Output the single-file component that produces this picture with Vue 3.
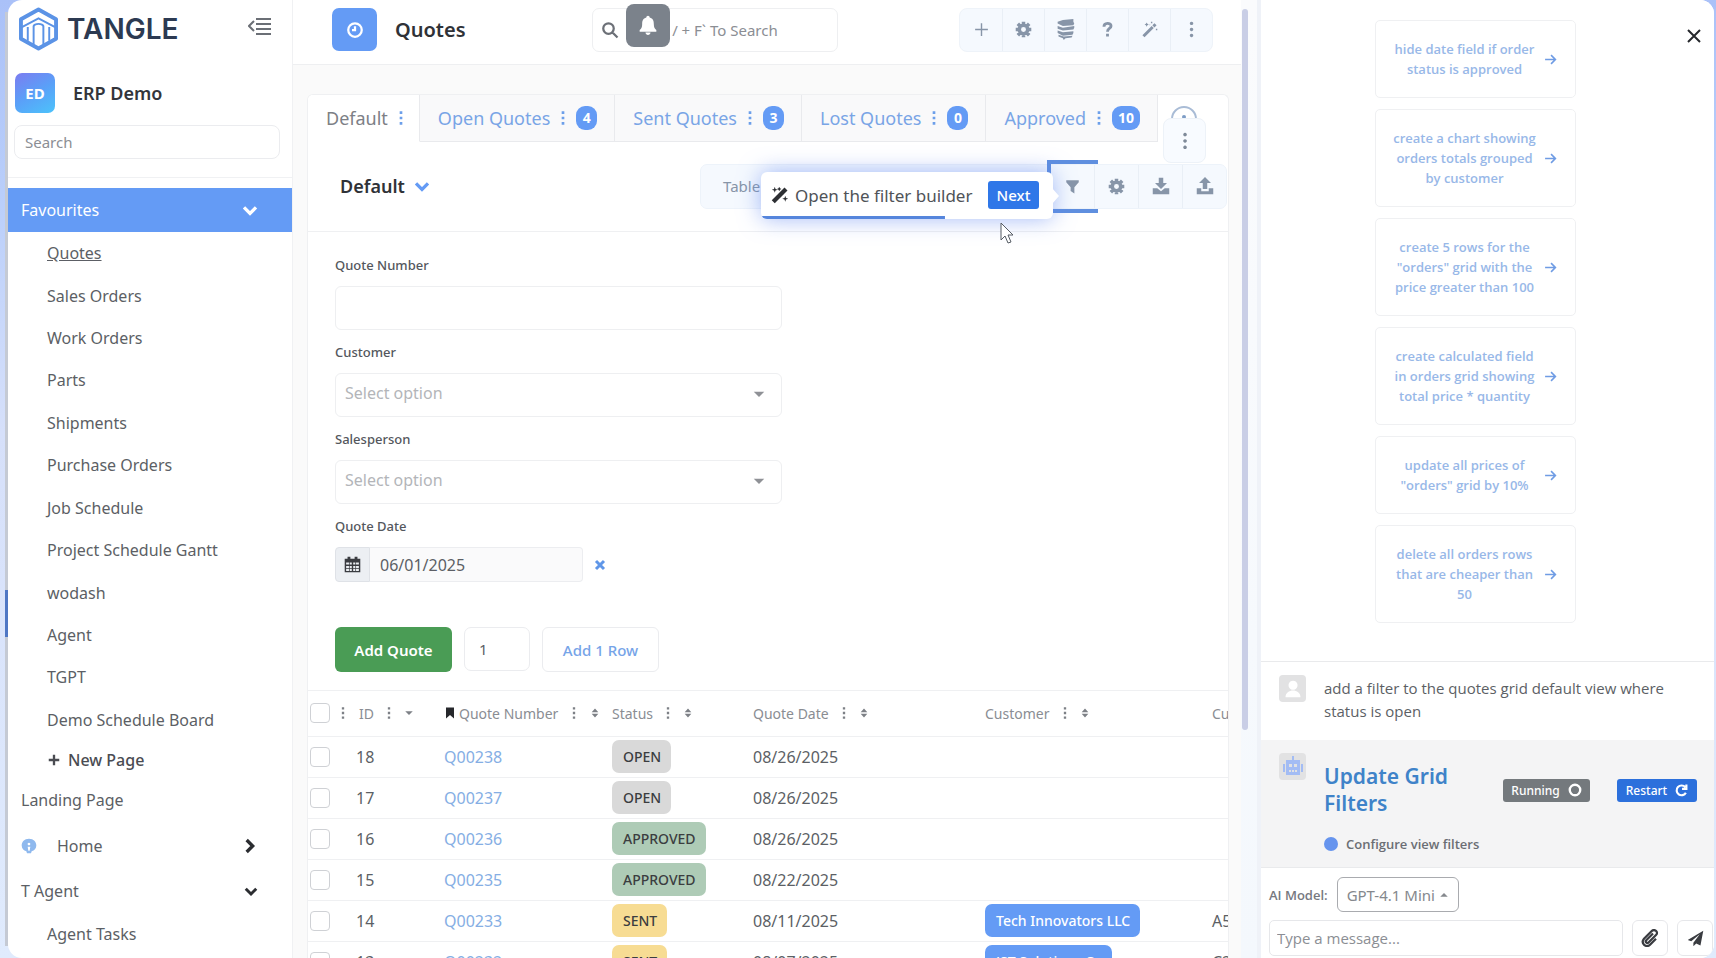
<script setup>
import { h, ref } from 'vue'

const glyphs = {
  plus: { s: 2, d: 'M12 3v18M3 12h18' },
  plusBold: { s: 4, d: 'M12 3v18M3 12h18' },
  chevronDown: { s: 5, d: 'M3 8l9 9 9-9' },
  chevronRight: { s: 5, d: 'M7 3l9 9-9 9' },
  close: { s: 3, d: 'M3 3l18 18M21 3L3 21' },
  closeBold: { s: 6, d: 'M4 4l16 16M20 4L4 20' },
  arrow: { s: 3, d: 'M2 12h19M13 4l8 8-8 8' },
  menu: { s: 2, d: 'M8 5h15M8 10h15M8 15h15M8 20h15M6 7l-5 5 5 5' },
  search: { s: 3, d: 'M10 3a7 7 0 1 0 0 14a7 7 0 1 0 0-14M15 15l7 7' },
  clock: { s: 3, d: 'M12 3a9 9 0 1 0 0 18a9 9 0 1 0 0-18M12 7v5H8' },
  gear: { s: 5, d: 'M12 6a6 6 0 1 0 0 12a6 6 0 1 0 0-12M12 1v4M12 19v4M1 12h4M19 12h4M4 4l3 3M17 17l3 3M20 4l-3 3M7 17l-3 3' },
  dots: { d: 'M10 2h4v4h-4zM10 10h4v4h-4zM10 18h4v4h-4z' },
  dotsRound: { d: 'M12 1a2.400 2.400 0 1 0 .1 0zM12 9.500a2.400 2.400 0 1 0 .1 0zM12 18a2.400 2.400 0 1 0 .1 0z' },
  layers: { d: 'M3 3l6-2 12-1v3l1 2-1 2-12 1-6-3zM3 8l6 2 13-2v2l-1 2-12 1-6-2zM3 13l6 2 12-1v2l-1 2-11 1-6-3zM4 18l6 2 10-1-1 2-7 1-2 2-1-2-5-2z' },
  question: { s: 4, d: 'M7 8c0-6 10-6 10-1 0 4-5 3-5 8M12 18v4' },
  wand: { d: 'M2 20L15 7l3 3L5 23zM16 6l3-3 3 3-3 3zM8 2l1 2 2 1-2 1-1 2-1-2-2-1 2-1zM14 1h2v2h-2zM21 11h2v2h-2zM12 5h1v1h-1z' },
  magic: { d: 'M1 19L18 2l4 4L5 23zM5 1l1 3 3 1-3 1-1 3-1-3-3-1 3-1zM11 1l1 2 2 1-2 1-1 2-1-2-2-1 2-1zM19 13l1 3 3 1-3 1-1 3-1-3-3-1 3-1z' },
  bell: { d: 'M12 1c1 0 2 1 2 2 4 1 5 4 5 8 0 4 1 5 3 7v2H2v-2c2-2 3-3 3-7 0-4 1-7 5-8 0-1 1-2 2-2zM9 21h6c0 4-6 4-6 0z' },
  filter: { d: 'M2 2h20v3l-7 8v10l-6-4v-6L2 5z' },
  download: { d: 'M9 1h6v7h5l-8 8-8-8h5zM1 15h6l5 4 5-4h6v8H1z' },
  upload: { d: 'M12 0l8 8h-5v8H9V8H4zM1 15h6v4h10v-4h6v8H1z' },
  calendar: { d: 'M1 4h4V1h4v3h6V1h4v3h4v19H1zM3 9v3h4V9zM8 9v3h3V9zM13 9v3h3V9zM17 9v3h4V9zM3 14v3h4v-3zM8 14v3h3v-3zM13 14v3h3v-3zM17 14v3h4v-3zM3 18v3h4v-3zM8 18v3h3v-3zM13 18v3h3v-3zM17 18v3h4v-3z' },
  bookmark: { d: 'M4 1h16v22l-8-7-8 7z' },
  caretDown: { d: 'M3 8h18l-9 9z' },
  caretUp: { d: 'M3 16h18l-9-9z' },
  sort: { d: 'M4 10l8-9 8 9zM4 14h16l-8 9z' },
  user: { d: 'M12 1a6 6 0 1 0 .1 0zM2 23c0-12 20-12 20 0z' },
  robot: { d: 'M11 1h2v4h6v15H5V5h6zM2 9h2v8H2zM20 9h2v8h-2zM8 9v3h3V9zM13 9v3h3V9zM8 15v2h2v-2zM11 15v2h2v-2zM14 15v2h2v-2z' },
  ring: { s: 4, d: 'M12 3a9 9 0 1 0 0 18a9 9 0 1 0 0-18' },
  redo: { s: 4, d: 'M20 16a9 9 0 1 1-1-10M21 1v8h-8' },
  clip: { s: 3, d: 'M16 6l-9 9c-2 2 1 5 3 3l10-10c4-4-2-9-6-5L4 13c-5 6 3 13 8 8l8-8' },
  send: { d: 'M23 1L1 14l5 2L18 6 9 18v5l4-4 6 3z' },
  podcast: { d: 'M12 1C5 1 1 6 1 11c0 5 3 8 7 9l1 3h6l1-3c4-1 7-4 7-9 0-5-4-10-11-10zM12 7a2 2 0 1 1-.1 0zM10 13h4l-1 6h-2z' },
}

const Icon = (props) => {
  const g = glyphs[props.name]
  return h('svg', { viewBox: '0 0 24 24', width: props.size, height: props.size, 'aria-hidden': 'true' }, [
    h('path', {
      d: g.d,
      fill: g.s ? 'none' : 'currentColor',
      'fill-rule': 'evenodd',
      stroke: g.s ? 'currentColor' : 'none',
      'stroke-width': g.s || 0,
    }),
  ])
}
Icon.props = ['name', 'size']

const favourites = ['Quotes', 'Sales Orders', 'Work Orders', 'Parts', 'Shipments', 'Purchase Orders', 'Job Schedule', 'Project Schedule Gantt', 'wodash', 'Agent', 'TGPT', 'Demo Schedule Board']
const tools = [['plus', 'Add'], ['gear', 'Settings'], ['layers', 'Layers'], ['question', 'Help'], ['wand', 'Assistant'], ['dotsRound', 'More']]
const tabs = [
  { name: 'Default' },
  { name: 'Open Quotes', count: 4 },
  { name: 'Sent Quotes', count: 3 },
  { name: 'Lost Quotes', count: 0 },
  { name: 'Approved', count: 10 },
]
const rows = [
  { id: 18, no: 'Q00238', status: 'OPEN', date: '08/26/2025' },
  { id: 17, no: 'Q00237', status: 'OPEN', date: '08/26/2025' },
  { id: 16, no: 'Q00236', status: 'APPROVED', date: '08/26/2025' },
  { id: 15, no: 'Q00235', status: 'APPROVED', date: '08/22/2025' },
  { id: 14, no: 'Q00233', status: 'SENT', date: '08/11/2025', customer: 'Tech Innovators LLC', code: 'A500' },
  { id: 13, no: 'Q00232', status: 'SENT', date: '08/07/2025', customer: 'JST Solutions Co', code: 'C200' },
]
const prompts = [
  'hide date field if order status is approved',
  'create a chart showing orders totals grouped by customer',
  'create 5 rows for the "orders" grid with the price greater than 100',
  'create calculated field in orders grid showing total price * quantity',
  'update all prices of "orders" grid by 10%',
  'delete all orders rows that are cheaper than 50',
]
const quoteDate = ref('06/01/2025')
const rowCount = ref('1')
</script>

<template>
  <div class="page">
    <span class="edge-mark"></span>
    <div class="window">
      <aside class="sidebar">
        <div class="brand">
          <svg class="logo" viewBox="0 0 40 44" width="39" height="44" fill="none" stroke="#5b93e6" stroke-width="4" stroke-linejoin="round" aria-hidden="true">
            <path d="M20 2l18 10v20L20 42 2 32V12z" />
            <path d="M3 20l17-9 17 9M9 20v14M15 38V19c1-3 9-3 10 0v19M31 20v14" stroke-width="2" />
          </svg>
          <span class="wordmark">TANGLE</span>
          <button class="icon-btn collapse" aria-label="Collapse menu"><Icon name="menu" size="24" /></button>
        </div>
        <div class="workspace">
          <span class="ws-badge">ED</span>
          <span class="ws-name">ERP Demo</span>
        </div>
        <div class="side-search"><input type="search" placeholder="Search" aria-label="Search pages" /></div>
        <button class="fav-head"><span>Favourites</span><Icon name="chevronDown" size="16" /></button>
        <nav class="side-nav">
          <div class="fav-list">
            <a v-for="(f, i) in favourites" :key="f" href="#" class="fav" :class="{ current: i === 0 }">{{ f }}</a>
          </div>
          <button class="new-page"><Icon name="plusBold" size="14" />New Page</button>
          <a href="#" class="landing">Landing Page</a>
          <a href="#" class="group"><Icon class="pod" name="podcast" size="16" /><span class="home">Home</span><Icon name="chevronRight" size="16" /></a>
          <a href="#" class="group"><span>T Agent</span><Icon name="chevronDown" size="14" /></a>
          <a href="#" class="fav">Agent Tasks</a>
        </nav>
      </aside>

      <main class="main">
        <header class="topbar">
          <span class="page-icon"><Icon name="clock" size="18" /></span>
          <h1>Quotes</h1>
          <label class="global-search">
            <Icon name="search" size="18" />
            <input type="text" placeholder="`CTRL / + F` To Search" aria-label="Global search" />
            <button class="bell" aria-label="Notifications"><Icon name="bell" size="20" /></button>
          </label>
          <div class="tools">
            <button v-for="t in tools" :key="t[0]" :aria-label="t[1]"><Icon :name="t[0]" :size="t[0] === 'layers' ? 21 : 17" /></button>
          </div>
        </header>

        <section class="card">
          <div class="tabs">
            <button v-for="(t, i) in tabs" :key="t.name" class="tab" :class="{ active: i === 0 }">
              {{ t.name }}<Icon name="dots" size="16" /><span v-if="t.count !== undefined" class="count">{{ t.count }}</span>
            </button>
            <div class="tab-extra">
              <span class="arc"></span>
              <button class="tab-more" aria-label="More views"><Icon name="dotsRound" size="18" /></button>
            </div>
          </div>

          <div class="view-row">
            <button class="view-name">Default<Icon name="chevronDown" size="16" /></button>
            <div class="view-tools">
              <button class="view-type">Table</button>
              <button class="highlight" aria-label="Filter"><Icon name="filter" size="15" /></button>
              <button aria-label="View settings"><Icon name="gear" size="17" /></button>
              <button aria-label="Download"><Icon name="download" size="18" /></button>
              <button aria-label="Upload"><Icon name="upload" size="18" /></button>
              <div class="tip">
                <Icon name="magic" size="18" />
                <span>Open the filter builder</span>
                <button class="next">Next</button>
              </div>
              <svg class="cursor" viewBox="0 0 14 22" width="14" height="22" aria-hidden="true"><path d="M1 1v17l4-4 3 7 3-1-3-7h5z" fill="#fff" stroke="#555b63" stroke-width="1" /></svg>
            </div>
          </div>

          <form class="form" @submit.prevent>
            <label for="qn">Quote Number</label>
            <input id="qn" class="field" type="text" />
            <label for="cust">Customer</label>
            <div class="select-wrap"><select id="cust" class="field"><option>Select option</option></select><Icon name="caretDown" size="14" /></div>
            <label for="sales">Salesperson</label>
            <div class="select-wrap"><select id="sales" class="field"><option>Select option</option></select><Icon name="caretDown" size="14" /></div>
            <label for="qd">Quote Date</label>
            <div class="date-row">
              <span class="cal"><Icon name="calendar" size="17" /></span>
              <input id="qd" v-model="quoteDate" type="text" />
              <button type="button" class="clear" aria-label="Clear date"><Icon name="closeBold" size="12" /></button>
            </div>
            <div class="actions">
              <button class="primary">Add Quote</button>
              <input v-model="rowCount" class="qty" type="text" aria-label="Rows to add" />
              <button type="button" class="outline">Add 1 Row</button>
            </div>
          </form>

          <div class="table-wrap">
            <table>
              <colgroup><col class="c-check" /><col class="c-id" /><col class="c-no" /><col class="c-status" /><col class="c-date" /><col class="c-cust" /><col class="c-code" /></colgroup>
              <thead>
                <tr>
                  <th class="check"><span class="head-cell"><input type="checkbox" aria-label="Select all" /><Icon name="dots" size="14" /></span></th>
                  <th class="id-head"><span class="head-cell">ID<Icon name="dots" size="14" /><Icon name="caretDown" size="10" /></span></th>
                  <th><span class="head-cell marked"><Icon class="bookmark" name="bookmark" size="12" />Quote Number<Icon name="dots" size="14" /><Icon name="sort" size="10" /></span></th>
                  <th><span class="head-cell">Status<Icon name="dots" size="14" /><Icon name="sort" size="10" /></span></th>
                  <th><span class="head-cell">Quote Date<Icon name="dots" size="14" /><Icon name="sort" size="10" /></span></th>
                  <th><span class="head-cell">Customer<Icon name="dots" size="14" /><Icon name="sort" size="10" /></span></th>
                  <th><span class="head-cell">Customer PO</span></th>
                </tr>
              </thead>
              <tbody>
                <tr v-for="r in rows" :key="r.id">
                  <td class="check"><input type="checkbox" :aria-label="'Select ' + r.no" /></td>
                  <td>{{ r.id }}</td>
                  <td><a href="#">{{ r.no }}</a></td>
                  <td><span class="pill" :class="r.status.toLowerCase()">{{ r.status }}</span></td>
                  <td>{{ r.date }}</td>
                  <td><span v-if="r.customer" class="pill customer">{{ r.customer }}</span></td>
                  <td>{{ r.code }}</td>
                </tr>
              </tbody>
            </table>
          </div>
        </section>
      </main>
      <div class="scroll-track"><span class="thumb"></span></div>

      <aside class="chat">
        <button class="icon-btn chat-close" aria-label="Close"><Icon name="close" size="16" /></button>
        <div class="prompts">
          <button v-for="p in prompts" :key="p" class="prompt"><span>{{ p }}</span><Icon name="arrow" size="13" /></button>
        </div>
        <div class="message">
          <span class="avatar"><Icon name="user" size="18" /></span>
          <p>add a filter to the quotes grid default view where status is open</p>
        </div>
        <div class="task">
          <span class="avatar bot"><Icon name="robot" size="24" /></span>
          <div class="task-body">
            <div class="task-head">
              <h2>Update Grid Filters</h2>
              <span class="running">Running<Icon name="ring" size="14" /></span>
              <button class="restart">Restart<Icon name="redo" size="13" /></button>
            </div>
            <div class="step"><span class="bullet"></span>Configure view filters</div>
          </div>
        </div>
        <div class="composer">
          <div class="model"><span>AI Model:</span><button>GPT-4.1 Mini<Icon name="caretUp" size="10" /></button></div>
          <div class="compose-row">
            <input type="text" placeholder="Type a message..." aria-label="Message" />
            <button aria-label="Attach"><Icon name="clip" size="18" /></button>
            <button aria-label="Send"><Icon name="send" size="17" /></button>
          </div>
        </div>
      </aside>
    </div>
  </div>
</template>

<style>
body {
  margin: 0;
}
</style>

<style scoped>
* {
  box-sizing: border-box;
}
.page {
  position: relative;
  height: 100vh;
  padding: 0 2px 0 8px;
  overflow: hidden;
  background: linear-gradient(#aac1f8 0, #b9cefa 20%, #d6e0fa 45%, #e0ebfd 100%);
  font-family: 'Noto Sans', 'Open Sans', sans-serif;
  font-size: 15px;
  color: #5c5f65;
}
.page::before {
  content: '';
  position: absolute;
  inset: 12px auto 12px 5px;
  width: 3px;
  background: #c5cad4;
}
.edge-mark {
  position: absolute;
  left: 5px;
  top: 590px;
  width: 3px;
  height: 47px;
  background: #4f77c4;
}
.window {
  position: relative;
  display: flex;
  height: 100%;
  border-radius: 14px;
  overflow: hidden;
  background: #fff;
}
button,
input,
select {
  font: inherit;
  color: inherit;
}
button {
  padding: 0;
  border: 0;
  background: none;
}
a {
  color: inherit;
  text-decoration: none;
}
svg {
  flex: none;
}

/* Sidebar */
.sidebar {
  flex: none;
  width: 285px;
  border-right: 1px solid #f0f1f3;
  font-size: 16px;
}
.brand {
  display: flex;
  align-items: center;
  height: 57px;
  padding: 0 20px 0 11px;
}
.wordmark {
  margin-left: 9px;
  font-family: Inter, sans-serif;
  font-size: 28px;
  font-weight: 600;
  color: #2c3a52;
}
.collapse {
  margin-left: auto;
  color: #6b6f76;
}
.workspace {
  display: flex;
  align-items: center;
  gap: 18px;
  padding: 16px 7px 12px;
}
.ws-badge {
  display: grid;
  place-items: center;
  width: 40px;
  height: 40px;
  border-radius: 7px;
  background: linear-gradient(150deg, #7c7cf0, #5aa0f8 50%, #4cc3fb);
  color: #fff;
  font-size: 15px;
  font-weight: 700;
}
.ws-name {
  font-size: 18px;
  font-weight: 600;
  color: #33353b;
}
.side-search {
  padding: 0 12px 18px 6px;
  border-bottom: 1px solid #f0f1f3;
}
.side-search input {
  display: block;
  width: 100%;
  height: 34px;
  padding: 0 10px;
  border: 1px solid #ebecef;
  border-radius: 8px;
  outline: 0;
  font-size: 15px;
}
input::placeholder {
  color: #8b8e94;
  opacity: 1;
}
.fav-head {
  display: flex;
  align-items: center;
  justify-content: space-between;
  width: 100%;
  height: 44px;
  margin-top: 10px;
  padding: 0 34px 0 13px;
  background: #649bf5;
  color: #fff;
}
.side-nav {
  display: flex;
  flex-direction: column;
}
.fav-list {
  display: grid;
  grid-auto-rows: 1fr;
  align-items: center;
  height: 509px;
}
.fav {
  height: 42px;
  padding-left: 39px;
  line-height: 42px;
}
.fav.current {
  text-decoration: underline;
}
.new-page {
  display: flex;
  align-items: center;
  gap: 7px;
  height: 38px;
  padding-left: 39px;
  font-weight: 500;
  color: #4a4c52;
}
.landing {
  height: 44px;
  padding-left: 13px;
  line-height: 42px;
}
.group {
  display: flex;
  align-items: center;
  justify-content: space-between;
  height: 45px;
  padding: 0 34px 0 13px;
}
.group > svg {
  color: #2b2d31;
}
.group > .pod {
  color: #8fb9ee;
}
.home {
  flex: 1;
  padding-left: 20px;
}

/* Main column */
.main {
  flex: 1;
  min-width: 0;
  display: flex;
  flex-direction: column;
  background: #fafafa;
}
.topbar {
  flex: none;
  display: flex;
  align-items: center;
  height: 65px;
  padding: 0 28px 5px 39px;
  border-bottom: 1px solid #eeeff1;
  background: #fff;
}
.page-icon {
  display: grid;
  place-items: center;
  width: 45px;
  height: 43px;
  border-radius: 7px;
  background: #649bf5;
  color: #fff;
}
h1 {
  margin: 0 0 0 18px;
  font-size: 20px;
  font-weight: 600;
  color: #2f3237;
}
.global-search {
  position: relative;
  display: flex;
  align-items: center;
  gap: 10px;
  width: 246px;
  height: 44px;
  margin-left: auto;
  padding: 0 8px;
  border: 1px solid #eeeff1;
  border-radius: 7px;
  color: #6c7077;
}
.global-search input {
  flex: 1;
  min-width: 0;
  padding: 0;
  border: 0;
  outline: 0;
  background: none;
}
.bell {
  position: absolute;
  left: 33px;
  top: -5px;
  display: grid;
  place-items: center;
  width: 44px;
  height: 43px;
  border-radius: 8px;
  background: #7b828b;
  color: #fff;
}
.tools {
  display: flex;
  margin-left: 121px;
  border: 1px solid #eef3f9;
  border-radius: 8px;
  background: #f5f9fe;
  color: #8795a8;
}
.tools button {
  display: grid;
  place-items: center;
  width: 42px;
  height: 42px;
}
.tools button + button,
.view-tools > button + button {
  border-left: 1px solid #e9eff6;
}
.card {
  flex: 1;
  min-height: 0;
  margin: 29px 12px 0 14px;
  border: 1px solid #eff0f2;
  border-bottom: 0;
  border-radius: 6px 6px 0 0;
  background: #fff;
  overflow: hidden;
}
.tabs {
  display: flex;
  height: 47px;
}
.tab {
  display: flex;
  align-items: center;
  gap: 7px;
  padding: 0 17px 0 18px;
  border: solid #e9eaed;
  border-width: 0 1px 1px 0;
  background: #f9f9fa;
  font-size: 18px;
  color: #79a5e6;
  white-space: nowrap;
}
.tab svg {
  margin: 0 -2px;
  color: #6c9fea;
}
.tab.active {
  padding-right: 12px;
  border-bottom-color: transparent;
  background: #fff;
  color: #7d8086;
}
.count {
  min-width: 21px;
  padding: 0 6px;
  border-radius: 9px;
  background: #649bf5;
  color: #fff;
  font-size: 14px;
  font-weight: 700;
  line-height: 24px;
}
.tab-extra {
  position: relative;
  flex: 1;
}
.arc {
  position: absolute;
  right: 31px;
  top: 11px;
  width: 26px;
  height: 26px;
  border: 2px solid #a9bcd6;
  border-radius: 50%;
}
.arc::after {
  content: '';
  position: absolute;
  left: 9px;
  top: 7px;
  width: 4px;
  height: 4px;
  border-radius: 50%;
  background: #7d9cc6;
}
.tab-more {
  position: absolute;
  right: 22px;
  top: 23px;
  display: grid;
  place-items: center;
  width: 43px;
  height: 45px;
  border: 1px solid #edf2f8;
  border-radius: 8px;
  background: #f8fbff;
  color: #7f8a99;
}
.view-row {
  display: flex;
  align-items: center;
  justify-content: space-between;
  height: 90px;
  padding: 0 1px 1px 32px;
  border-bottom: 1px solid #eff0f2;
}
.view-name {
  display: flex;
  align-items: center;
  gap: 9px;
  font-size: 18px;
  font-weight: 600;
  color: #2f3237;
}
.view-name svg {
  color: #649bf5;
}
.view-tools {
  position: relative;
  display: flex;
  width: 527px;
  border: 1px solid #edf3fa;
  border-radius: 7px;
  background: #f5f9fe;
  color: #8795a8;
}
.view-tools > button {
  position: relative;
  display: grid;
  place-items: center;
  width: 44px;
  height: 43px;
}
.view-tools > .view-type {
  flex: 1;
  justify-content: start;
  padding-left: 22px;
}
.view-tools > .highlight::before {
  content: '';
  position: absolute;
  inset: -5px -4px -5px -4px;
  border: solid #5f8fdf;
  border-width: 4px 0 4px 4px;
}
.tip {
  position: absolute;
  right: 173px;
  top: 7px;
  display: flex;
  align-items: center;
  gap: 6px;
  width: 292px;
  height: 47px;
  padding: 0 14px 0 10px;
  border-radius: 6px;
  background: linear-gradient(#5585dc, #5585dc) left bottom / 63% 3px no-repeat, #fff;
  box-shadow: 0 0 22px rgba(90, 130, 240, 0.55);
  font-size: 17px;
  color: #505358;
  white-space: nowrap;
}
.tip > svg {
  color: #2d2f33;
}
.tip::after {
  content: '';
  position: absolute;
  right: -6px;
  top: 16px;
  border: solid transparent;
  border-width: 8px 0 8px 7px;
  border-left-color: #fff;
}
.next {
  width: 51px;
  height: 28px;
  margin-left: auto;
  border-radius: 3px;
  background: #2f77e8;
  color: #fff;
  font-size: 15px;
  font-weight: 500;
}
.cursor {
  position: absolute;
  left: 299px;
  top: 57px;
}

/* Quote form */
.form {
  padding: 23px 27px 18px;
  border-bottom: 1px solid #eff0f2;
}
.form label {
  display: block;
  font-size: 13px;
  font-weight: 500;
  line-height: 20px;
  color: #54575d;
}
.field {
  display: block;
  width: 447px;
  height: 44px;
  margin: 11px 0 12px;
  padding: 0 9px 4px;
  appearance: none;
  border: 1px solid #eeeff1;
  border-radius: 6px;
  outline: 0;
  background: #fff;
  color: #b3b5b9;
  font-size: 16px;
}
.select-wrap {
  position: relative;
  width: 447px;
}
.select-wrap svg {
  position: absolute;
  right: 16px;
  top: 14px;
  color: #8f9196;
  pointer-events: none;
}
.date-row {
  display: flex;
  align-items: center;
  height: 35px;
  margin: 11px 0 45px;
}
.cal {
  display: grid;
  place-items: center;
  width: 35px;
  height: 35px;
  border: 1px solid #dfe2e7;
  border-radius: 4px 0 0 4px;
  background: #eceff3;
  color: #3a3c41;
}
.date-row input {
  width: 213px;
  height: 35px;
  padding: 0 10px;
  border: 1px solid #ecedf0;
  border-left: 0;
  border-radius: 0 4px 4px 0;
  outline: 0;
  background: #fafafb;
  font-size: 16px;
}
.clear {
  margin-left: 11px;
  color: #5f96e8;
}
.actions {
  display: flex;
  gap: 12px;
}
.primary,
.outline {
  width: 117px;
  height: 45px;
  border-radius: 6px;
}
.primary {
  background: #4a9c55;
  color: #fff;
  font-weight: 600;
}
.outline {
  border: 1px solid #ebecef;
  color: #76a4e8;
  font-weight: 500;
}
.qty {
  width: 66px;
  height: 44px;
  padding: 0 14px;
  border: 1px solid #ebecef;
  border-radius: 7px;
  outline: 0;
}

/* Quotes table */
.table-wrap {
  overflow: hidden;
}
table {
  width: 1100px;
  table-layout: fixed;
  border-collapse: collapse;
  font-size: 16px;
}
.c-check {
  width: 40px;
}
.c-id {
  width: 88px;
}
.c-no {
  width: 168px;
}
.c-status {
  width: 141px;
}
.c-date {
  width: 232px;
}
.c-cust {
  width: 227px;
}
th,
td {
  height: 41px;
  padding: 0 0 0 8px;
  border-bottom: 1px solid #eff0f2;
  text-align: left;
  white-space: nowrap;
}
th {
  height: 45px;
  font-size: 14px;
  font-weight: 400;
  color: #8a8d93;
}
th.check,
td.check {
  padding-left: 2px;
}
th.id-head {
  padding-left: 11px;
}
.head-cell {
  display: flex;
  align-items: center;
  gap: 8px;
}
.marked {
  gap: 9px;
}
.check .head-cell {
  gap: 6px;
}
.head-cell svg {
  color: #7d8086;
}
.head-cell .bookmark {
  margin-right: -6px;
  color: #26282c;
}
td input,
th input {
  display: block;
  flex: none;
  width: 20px;
  height: 20px;
  margin: 0;
  appearance: none;
  border: 1px solid #cfd1d5;
  border-radius: 4px;
  background: #fff;
}
td a {
  color: #85aee4;
}
.pill {
  display: inline-block;
  padding: 0 10px 0 11px;
  border-radius: 7px;
  font-size: 14px;
  font-weight: 500;
  line-height: 33px;
  vertical-align: middle;
  color: #3b3d40;
}
.open {
  background: #d9d9d9;
}
.approved {
  background: #aecbb6;
}
.sent {
  background: #f7dc93;
}
.customer {
  background: #649bf5;
  color: #fff;
}
.scroll-track {
  flex: none;
  width: 20px;
  padding: 9px 0 0 1px;
  border-right: 4px solid #eff2f8;
  background: linear-gradient(#fafbfd, #f4f8fd);
}
.thumb {
  display: block;
  width: 6px;
  height: 721px;
  border-radius: 3px;
  background: #c9cee6;
}

/* Assistant panel */
.chat {
  position: relative;
  flex: none;
  display: flex;
  flex-direction: column;
  width: 453px;
  background: #fff;
}
.chat-close {
  position: absolute;
  right: 12px;
  top: 28px;
  height: 16px;
  line-height: 0;
  color: #26282c;
}
.prompts {
  display: flex;
  flex-direction: column;
  gap: 11px;
  width: 201px;
  margin: 20px auto 38px 114px;
}
.prompt {
  display: flex;
  align-items: center;
  padding: 18px;
  border: 1px solid #eff0f2;
  border-radius: 5px;
  font-family: 'Open Sans', 'Noto Sans', sans-serif;
  font-size: 13px;
  font-weight: 600;
  line-height: 20px;
  color: #98b8e8;
}
.prompt span {
  flex: 1;
  margin: 0 7px 0 -2px;
}
.prompt svg {
  color: #6f9ce4;
}
.message {
  display: flex;
  gap: 18px;
  padding: 13px 18px 17px;
  border-top: 1px solid #e9eaec;
}
.message p {
  max-width: 350px;
  margin: 2px 0 0;
  font-family: 'Open Sans', 'Noto Sans', sans-serif;
  font-size: 15px;
  line-height: 23px;
}
.avatar {
  flex: none;
  display: grid;
  place-items: center;
  width: 27px;
  height: 27px;
  border-radius: 4px;
  background: #e2e2e3;
  color: #fff;
}
.bot {
  color: #a3bcf4;
}
.task {
  display: flex;
  gap: 18px;
  padding: 13px 17px 11px 18px;
  background: #f4f4f5;
  border-bottom: 1px solid #e9eaec;
}
.task-body {
  flex: 1;
}
.task-head {
  display: flex;
  align-items: center;
  padding-top: 10px;
}
h2 {
  width: 160px;
  margin: 0 auto 0 0;
  font-size: 21px;
  font-weight: 600;
  line-height: 27px;
  color: #3f83c9;
}
.running,
.restart {
  display: flex;
  align-items: center;
  justify-content: center;
  gap: 8px;
  height: 23px;
  border-radius: 3px;
  color: #fff;
  font-size: 12px;
  font-weight: 500;
}
.running {
  width: 87px;
  margin-right: 27px;
  background: #74797d;
}
.restart {
  width: 80px;
  background: #2c70dc;
}
.step {
  display: flex;
  align-items: center;
  gap: 8px;
  height: 24px;
  margin-top: 15px;
  font-family: 'Open Sans', 'Noto Sans', sans-serif;
  font-size: 13px;
  font-weight: 600;
  color: #6b6e74;
}
.bullet {
  width: 14px;
  height: 14px;
  border-radius: 50%;
  background: #6694ee;
}
.composer {
  padding: 9px 1px 0 8px;
}
.model {
  display: flex;
  align-items: center;
  gap: 9px;
}
.model span {
  font-family: 'Open Sans', 'Noto Sans', sans-serif;
  font-size: 13px;
  font-weight: 600;
  color: #77797f;
}
.model button {
  display: flex;
  align-items: center;
  gap: 4px;
  height: 35px;
  padding: 0 9px;
  border: 1px solid #a9abaf;
  border-radius: 6px;
  color: #85888d;
}
.compose-row {
  display: flex;
  gap: 9px;
  margin-top: 8px;
  color: #3a3c41;
}
.compose-row input {
  flex: 1;
  min-width: 0;
  height: 36px;
  padding: 0 7px;
  border: 1px solid #e6e7ea;
  border-radius: 5px;
  outline: 0;
  font-family: 'Open Sans', 'Noto Sans', sans-serif;
}
.compose-row button {
  display: grid;
  place-items: center;
  width: 36px;
  height: 36px;
  border: 1px solid #e6e7ea;
  border-radius: 6px;
}
</style>
